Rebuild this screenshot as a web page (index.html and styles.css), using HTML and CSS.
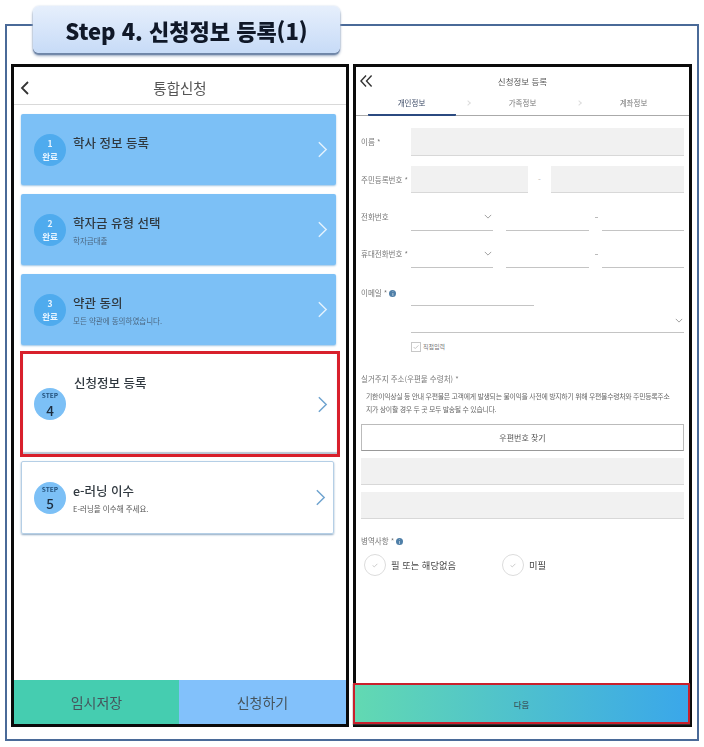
FILE: index.html
```html
<!DOCTYPE html>
<html lang="ko">
<head>
<meta charset="utf-8">
<title>Step 4. 신청정보 등록(1)</title>
<link rel="stylesheet" href="styles.css">
</head>
<body>
<div class="frame">
  <div class="step-title">Step 4. 신청정보 등록(1)</div>
  <section class="phone">
    <header class="bar">
      <svg class="back" viewBox="0 0 10 16"><path d="M8 2 2 8l6 6"/></svg>
      <span class="bar-title">통합신청</span>
    </header>
    <div class="cards">
      <a class="card done">
        <span class="badge"><b>1</b><i>완료</i></span>
        <span class="info"><strong>학사 정보 등록</strong></span>
        <svg class="chev" viewBox="0 0 12 20"><path d="M2 2l8 8-8 8"/></svg>
      </a>
      <a class="card done">
        <span class="badge"><b>2</b><i>완료</i></span>
        <span class="info"><strong>학자금 유형 선택</strong><small>학자금대출</small></span>
        <svg class="chev" viewBox="0 0 12 20"><path d="M2 2l8 8-8 8"/></svg>
      </a>
      <a class="card done">
        <span class="badge"><b>3</b><i>완료</i></span>
        <span class="info"><strong>약관 동의</strong><small>모든 약관에 동의하였습니다.</small></span>
        <svg class="chev" viewBox="0 0 12 20"><path d="M2 2l8 8-8 8"/></svg>
      </a>
      <a class="card current">
        <span class="badge step"><i>STEP</i><b>4</b></span>
        <span class="info"><strong>신청정보 등록</strong></span>
        <svg class="chev" viewBox="0 0 12 20"><path d="M2 2l8 8-8 8"/></svg>
      </a>
      <a class="card todo">
        <span class="badge step"><i>STEP</i><b>5</b></span>
        <span class="info"><strong>e-러닝 이수</strong><small>E-러닝을 이수해 주세요.</small></span>
        <svg class="chev" viewBox="0 0 12 20"><path d="M2 2l8 8-8 8"/></svg>
      </a>
    </div>
    <div class="actions">
      <button class="act save">임시저장</button>
      <button class="act apply">신청하기</button>
    </div>
  </section>

  <section class="phone">
    <header class="form-head">
      <svg class="dback" viewBox="0 0 14 14"><path d="M6.500 1 1 7l5.500 6M12.500 1 7 7l5.500 6"/></svg>
      <span class="form-title">신청정보 등록</span>
    </header>
    <nav class="tabs">
      <span class="tab active"><span>개인정보</span></span>
      <span class="tab"><span>가족정보</span></span>
      <span class="tab"><span>계좌정보</span></span>
    </nav>
    <form class="form">
      <div class="row r-name"><label>이름 *</label><div class="fields"><span class="fill grow"></span></div></div>
      <div class="row r-id"><label>주민등록번호 *</label><div class="fields gap-id"><span class="fill w117"></span><em>-</em><span class="fill grow"></span></div></div>
      <div class="row r-tel"><label>전화번호</label><div class="fields gap-tel"><span class="line sel"><svg class="dd" viewBox="0 0 10 6"><path d="M1 1l4 4 4-4"/></svg></span><span class="line"></span><span class="line dash"></span></div></div>
      <div class="row r-tel"><label>휴대전화번호 *</label><div class="fields gap-tel"><span class="line sel"><svg class="dd" viewBox="0 0 10 6"><path d="M1 1l4 4 4-4"/></svg></span><span class="line"></span><span class="line dash"></span></div></div>
      <div class="row r-mail"><label>이메일 * <u class="i">i</u></label><div class="mail"><span class="line m1"></span><span class="line m2"><svg class="dd" viewBox="0 0 10 6"><path d="M1 1l4 4 4-4"/></svg></span><span class="chk"><span class="box"><svg viewBox="0 0 10 10"><path d="M2 5l2 2 4-4"/></svg></span>직접입력</span></div></div>
      <p class="sub-label addr">실거주지 주소(우편물 수령처) *</p>
      <p class="notice">기한이익상실 등 안내 우편물은 고객에게 발생되는 불이익을 사전에 방지하기 위해 우편물수령처와 주민등록주소<br>지가 상이할 경우 두 곳 모두 발송될 수 있습니다.</p>
      <button type="button" class="zip">우편번호 찾기</button>
      <span class="fill block first"></span>
      <span class="fill block"></span>
      <p class="sub-label mil">병역사항 * <u class="i">i</u></p>
      <div class="radios">
        <span class="radio r1"><span class="circle"><svg viewBox="0 0 10 10"><path d="M3 5.500l1.500 1L7 4"/></svg></span>필 또는 해당없음</span>
        <span class="radio"><span class="circle"><svg viewBox="0 0 10 10"><path d="M3 5.500l1.500 1L7 4"/></svg></span>미필</span>
      </div>
    </form>
    <button class="next">다음</button>
  </section>
</div>
</body>
</html>
```
FILE: styles.css
```css
* { box-sizing: border-box; }
html, body { margin: 0; padding: 0; background: #fff; }
body {
  width: 704px;
  height: 747px;
  padding: 24px 5px 6px;
  font-family: "Noto Sans CJK KR", "Noto Sans", sans-serif;
  color: #333;
  overflow: hidden;
}
.frame {
  position: relative;
  display: flex;
  gap: 4px;
  height: 717px;
  padding: 38px 6px 12px 4px;
  border: 2px solid #4a6a98;
}
.step-title {
  position: absolute;
  left: 26px;
  top: -20px;
  width: 307px;
  height: 47px;
  display: flex;
  align-items: center;
  justify-content: center;
  font-size: 22px;
  font-weight: 900;
  color: #101828;
  background: linear-gradient(#e6effc, #c7dbf7);
  border-radius: 6px;
  box-shadow: 0 2px 1px #6f86a8, 0 3px 3px #9aa9c0, 0 0 2px #c5d3e6;
  filter: blur(.4px);
}
.phone {
  display: flex;
  flex-direction: column;
  flex: 0 0 338px;
  min-width: 0;
  height: 663px;
  border: 3px solid #0a0a0a;
  background: #fff;
  position: relative;
}
.phone + .phone { flex-basis: 339px; }

/* left phone */
.bar {
  height: 38px;
  flex: none;
  display: flex;
  align-items: center;
  justify-content: center;
  position: relative;
  border-bottom: 1px solid #d9d9d9;
}
.back {
  position: absolute;
  left: 6px;
  top: 13px;
  width: 10px;
  height: 16px;
  fill: none;
  stroke: #333;
  stroke-width: 1.800;
}
.bar-title { font-size: 14.500px; color: #555; margin-top: 3px; filter: blur(.4px); }
.cards {
  display: flex;
  flex-direction: column;
  padding: 9px 0 0 7px;
}
.card {
  display: flex;
  align-items: center;
  flex: none;
  height: 71px;
  padding: 0 8px 0 13px;
  margin-bottom: 9px;
  border-radius: 2px;
}
.done { width: 315px; background: #7cc0f6; box-shadow: 0 1px 2px #9cc4e4; }
.current {
  height: 106px;
  width: 320px;
  margin: -3px 0 4px -1px;
  padding: 0 9px 0 11px;
  border: 3px solid #d8202c;
  border-radius: 0;
  box-shadow: inset 0 -2px 1px #b9c6d4;
}
.todo {
  height: 73px;
  width: 313px;
  margin: 0;
  padding-left: 12px;
  padding-right: 7px;
  border: 1px solid #b5cfe6;
  box-shadow: 0 1px 2px #8ea9c2;
}
.badge {
  flex: none;
  width: 32px;
  height: 32px;
  border-radius: 50%;
  background: #4fabee;
  color: #e9f5ff;
  display: flex;
  flex-direction: column;
  align-items: center;
  justify-content: center;
  filter: blur(.35px);
}
.badge b { font-size: 8.500px; line-height: 12.500px; font-weight: 700; }
.badge i { font-size: 8.500px; line-height: 12.500px; font-style: normal; font-weight: 700; }
.step { background: #7cc0f6; color: #1c2c3e; justify-content: flex-start; padding-top: 3px; }
.badge.step i { font-size: 6.500px; line-height: 9.500px; color: #24527c; }
.badge.step b { font-size: 13.500px; line-height: 19px; font-weight: 500; }
.info {
  align-self: flex-start;
  display: flex;
  flex-direction: column;
  padding: 20px 0 0 7px;
  filter: blur(.4px);
}
.current .info { padding-top: 20px; padding-left: 8px; }
.todo .info { padding-top: 20px; }
.info strong { font-size: 12.500px; line-height: 18px; font-weight: 500; color: #30383f; }
.info small { font-size: 7.500px; line-height: 11px; margin-top: 3px; color: #4c6780; }
.todo .info small { color: #555; }
.chev {
  margin-left: auto;
  flex: none;
  width: 11px;
  height: 19px;
  fill: none;
  stroke: #e2f1fd;
  stroke-width: 1.600;
}
.current .chev, .todo .chev { stroke: #6fa3cf; }
.actions { margin-top: auto; display: flex; height: 44px; flex: none; }
.act {
  border: 0;
  font: inherit;
  font-size: 14px;
  color: #46545c;
  padding: 0;
  filter: blur(.3px);
}
.save { width: 165px; background: #45cdb0; }
.apply { flex: 1; background: #82c1fb; }

/* right phone */
.form-head {
  flex: none;
  height: 26px;
  display: flex;
  align-items: center;
  justify-content: center;
  position: relative;
}
.dback {
  position: absolute;
  left: 4px;
  top: 7px;
  width: 13px;
  height: 14px;
  fill: none;
  stroke: #333;
  stroke-width: 1.500;
}
.form-title { font-size: 8.500px; color: #555; margin-top: 2px; filter: blur(.3px); }
.tabs {
  flex: none;
  display: flex;
  height: 23px;
  border-bottom: 1px solid #aaa;
}
.tab {
  flex: 1;
  position: relative;
  display: flex;
  justify-content: center;
  font-size: 7.500px;
  line-height: 20px;
  color: #777;
  filter: blur(.3px);
}
.tab + .tab::before {
  content: "";
  position: absolute;
  left: -1px;
  top: 8px;
  width: 3px;
  height: 3px;
  border-top: 1px solid #ddd;
  border-right: 1px solid #ddd;
  transform: rotate(45deg);
}
.tab.active span {
  width: 88px;
  text-align: center;
  height: 23px;
  color: #3c4a66;
  border-bottom: 2px solid #2b4a80;
  border-radius: 1px;
}
.form {
  display: flex;
  flex-direction: column;
  padding: 12px 5px 0 5px;
  min-height: 0;
}
.row { display: flex; flex: none; margin-bottom: 10px; }
.row label {
  flex: 0 0 50px;
  font-size: 7.500px;
  color: #777;
  white-space: nowrap;
  filter: blur(.3px);
}
.fields { flex: 1; display: flex; align-items: stretch; min-width: 0; }
.r-name { height: 28px; }
.r-name label, .r-id label { line-height: 28px; }
.r-id { height: 27px; margin-bottom: 11px; }
.r-tel { height: 27px; margin-bottom: 10px; }
.r-tel label { line-height: 26px; }
.r-mail { height: 74px; margin-bottom: 0; }
.r-mail label { line-height: 30px; }
.fill {
  display: block;
  background: #f1f1f1;
  border-bottom: 1px solid #d8d8d8;
}
.grow { flex: 1; }
.w117 { flex: 0 0 117px; }
.gap-id em {
  flex: 0 0 23px;
  text-align: center;
  font-style: normal;
  font-size: 8px;
  line-height: 28px;
  color: #bbb;
}
.gap-tel { gap: 13px; }
.line {
  display: block;
  position: relative;
  border-bottom: 1px solid #c4c4c4;
}
.gap-tel .line { flex: 1; }
.dash::before {
  content: "";
  position: absolute;
  left: -7px;
  top: 13px;
  width: 3px;
  height: 1px;
  background: #bbb;
}
.dd {
  position: absolute;
  right: 1px;
  top: 10px;
  width: 8px;
  height: 5px;
  fill: none;
  stroke: #8a8a8a;
  stroke-width: 1;
}
.mail { flex: 1; display: flex; flex-direction: column; }
.m1 { width: 123px; height: 28px; flex: none; }
.m2 { height: 27px; flex: none; }
.m2 .dd { top: 12px; }
.chk {
  display: flex;
  align-items: center;
  gap: 2px;
  margin-top: 9px;
  font-size: 6px;
  color: #777;
  line-height: 10px;
}
.box {
  width: 10px;
  height: 10px;
  border: 1px solid #c8c8c8;
  display: flex;
}
.box svg { width: 8px; height: 8px; fill: none; stroke: #b8b8b8; stroke-width: 1; }
.i {
  display: inline-block;
  width: 7px;
  height: 7px;
  line-height: 7px;
  border-radius: 50%;
  background: #4f7fa8;
  color: #fff;
  font-size: 5px;
  text-align: center;
  text-decoration: none;
  vertical-align: 0;
}
.sub-label {
  margin: 0;
  font-size: 7.500px;
  line-height: 12px;
  color: #777;
  filter: blur(.3px);
}
.addr { margin-top: 21px; }
.notice {
  margin: 5px 0 0;
  padding: 0 0 0 5px;
  font-size: 6.900px;
  line-height: 13px;
  color: #666;
  letter-spacing: -.27px;
  white-space: nowrap;
  filter: blur(.3px);
}
.zip {
  flex: none;
  margin-top: 8px;
  height: 27px;
  padding: 0;
  border: 1px solid #bbb;
  border-bottom-color: #999;
  background: #fff;
  font: inherit;
  font-size: 8px;
  color: #555;
  filter: blur(.2px);
}
.block { height: 27px; flex: none; margin-top: 7px; }
.mil { margin-top: 16px; }
.radios { display: flex; margin-top: 7px; padding-left: 3px; }
.radio {
  display: flex;
  align-items: center;
  gap: 5px;
  font-size: 9.300px;
  color: #444;
  filter: blur(.25px);
}
.r1 { width: 138px; }
.circle {
  width: 22px;
  height: 22px;
  border: 1px solid #dcdcdc;
  border-radius: 50%;
  display: flex;
  align-items: center;
  justify-content: center;
}
.circle svg { width: 12px; height: 12px; fill: none; stroke: #c9c9c9; stroke-width: .8; }
.next {
  flex: none;
  margin: auto -1px 0 -3px;
  height: 41px;
  padding: 0;
  border: 2px solid #c9202c;
  background: linear-gradient(90deg, #62d9b2, #3aa7ea);
  font: inherit;
  font-size: 8.500px;
  color: #33444c;
  position: relative;
  box-shadow: 0 1px 1px #333;
}
```
